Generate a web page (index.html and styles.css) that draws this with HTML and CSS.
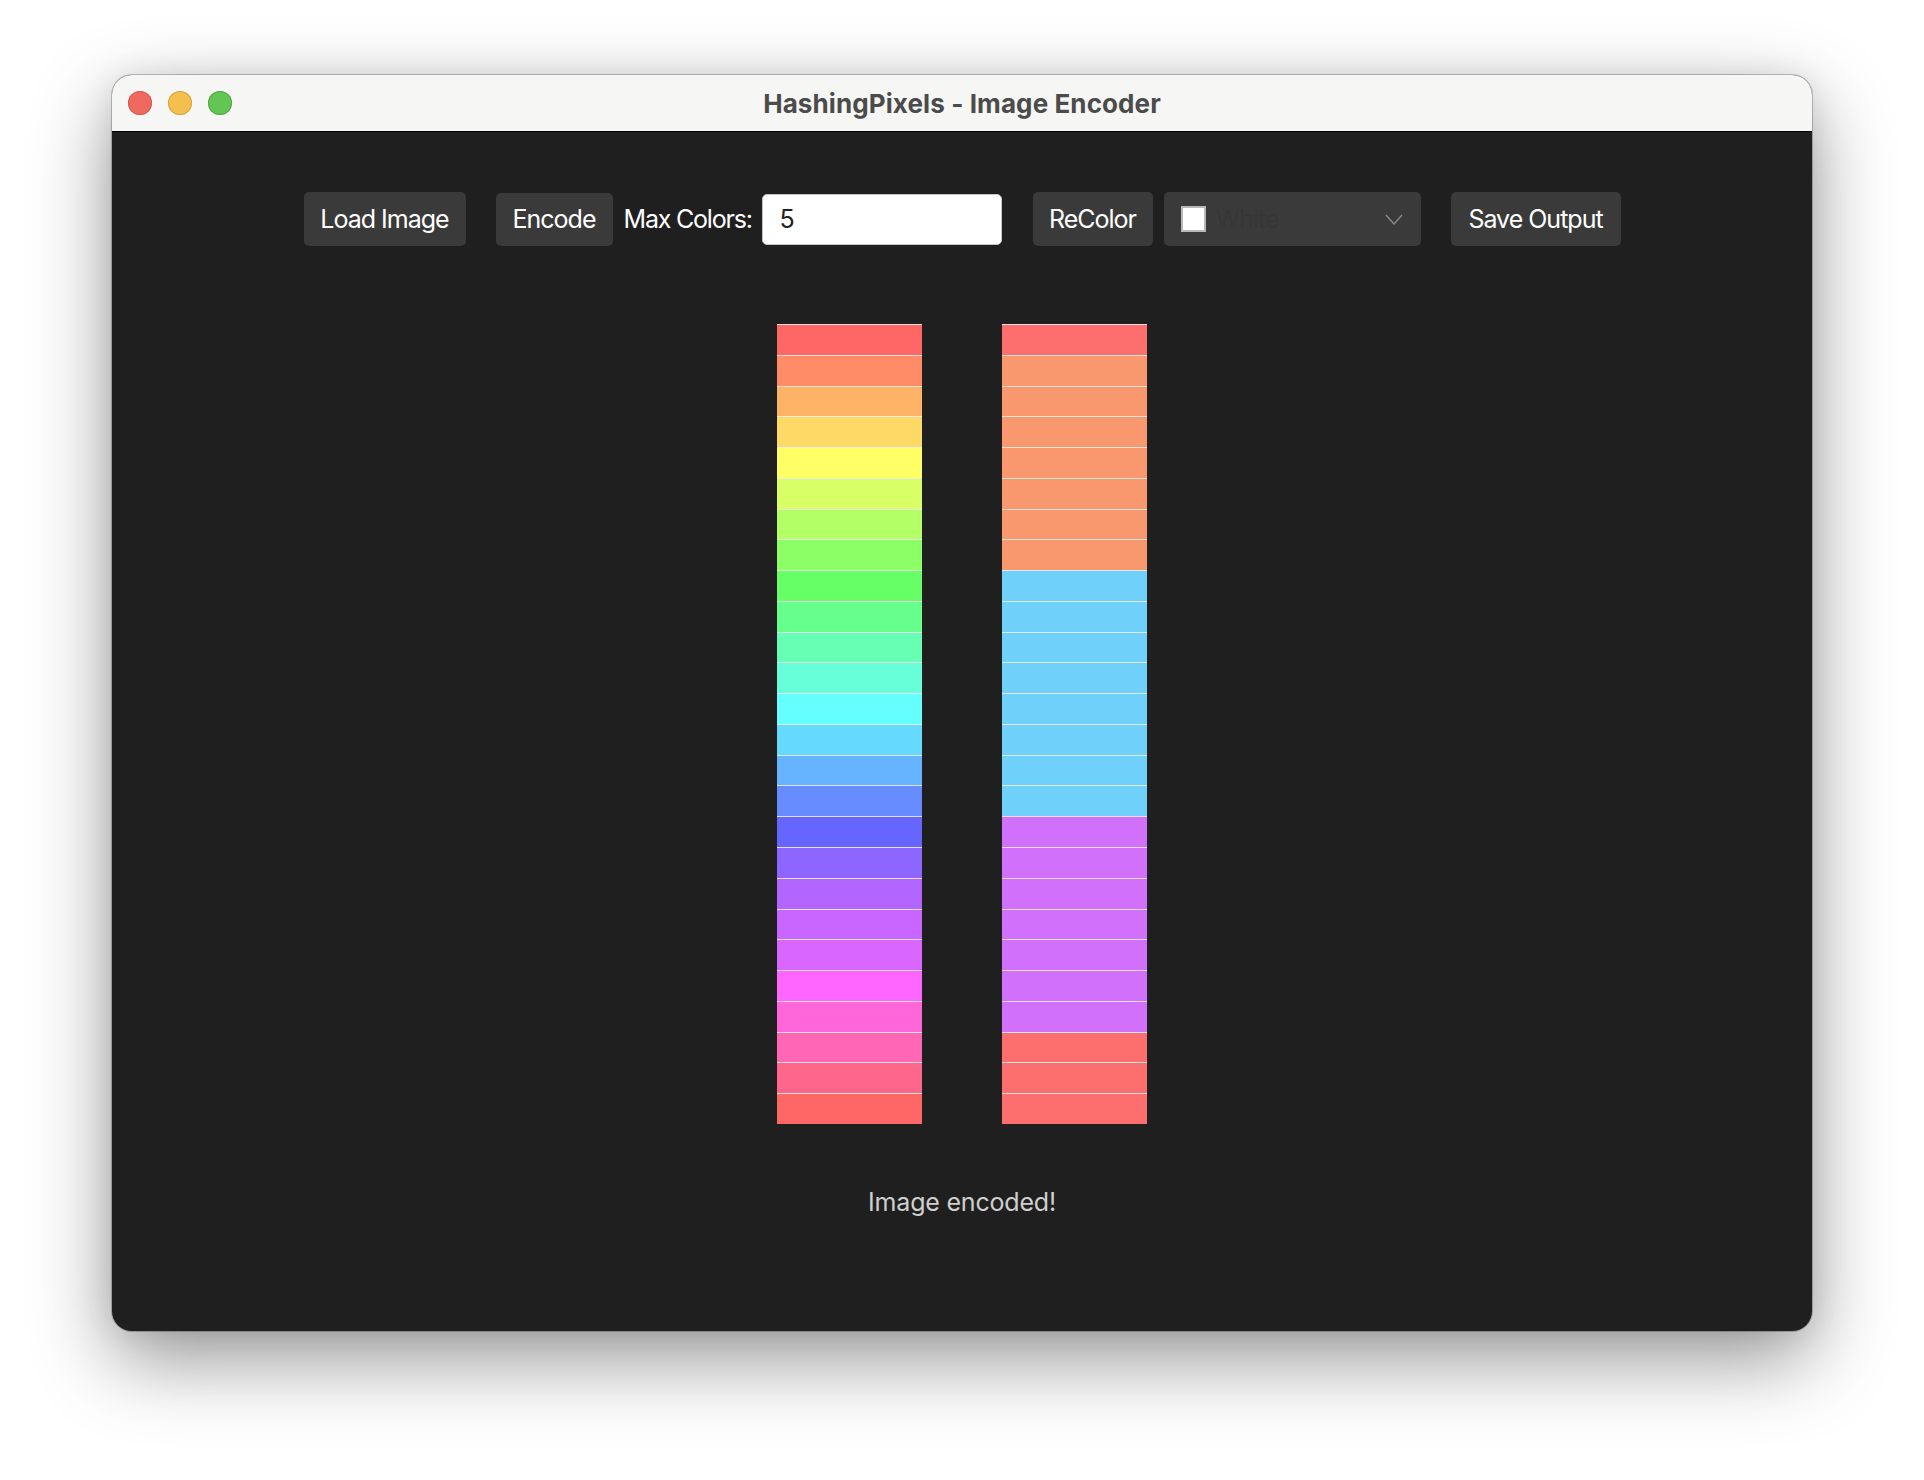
FILE: index.html
```html
<!DOCTYPE html>
<html>
<head>
<meta charset="utf-8">
<title>HashingPixels - Image Encoder</title>
<link rel="stylesheet" href="styles.css">
</head>
<body>
<div class="window">
  <div class="titlebar">
    <div class="lights">
      <span class="light red"></span>
      <span class="light yellow"></span>
      <span class="light green"></span>
    </div>
    <div class="title">HashingPixels - Image Encoder</div>
  </div>
  <div class="content">
    <div class="toolbar">
      <button class="btn btn-load">Load Image</button>
      <div class="group group-encode">
        <button class="btn btn-encode">Encode</button>
        <span class="label">Max Colors:</span>
        <input class="num" type="text" value="5">
      </div>
      <div class="group group-recolor">
        <button class="btn btn-recolor">ReColor</button>
        <div class="select">
          <span class="swatch"></span>
          <span class="select-text">White</span>
          <svg class="chev" width="18" height="11" viewBox="0 0 18 11"><path d="M1 1 L9 10 L17 1" fill="none" stroke="#8a8a8a" stroke-width="1.4"/></svg>
        </div>
      </div>
      <button class="btn btn-save">Save Output</button>
    </div>
    <div class="bars">
      <div class="bar">
        <div class="strip" style="background:#ff6666"></div>
        <div class="strip" style="background:#ff8c66"></div>
        <div class="strip" style="background:#ffb366"></div>
        <div class="strip" style="background:#ffd966"></div>
        <div class="strip" style="background:#ffff66"></div>
        <div class="strip" style="background:#d9ff66"></div>
        <div class="strip" style="background:#b3ff66"></div>
        <div class="strip" style="background:#8cff66"></div>
        <div class="strip" style="background:#66ff66"></div>
        <div class="strip" style="background:#66ff8c"></div>
        <div class="strip" style="background:#66ffb3"></div>
        <div class="strip" style="background:#66ffd9"></div>
        <div class="strip" style="background:#66ffff"></div>
        <div class="strip" style="background:#66d9ff"></div>
        <div class="strip" style="background:#66b3ff"></div>
        <div class="strip" style="background:#668cff"></div>
        <div class="strip" style="background:#6666ff"></div>
        <div class="strip" style="background:#8c66ff"></div>
        <div class="strip" style="background:#b366ff"></div>
        <div class="strip" style="background:#c966ff"></div>
        <div class="strip" style="background:#d966ff"></div>
        <div class="strip" style="background:#ff66ff"></div>
        <div class="strip" style="background:#ff66d9"></div>
        <div class="strip" style="background:#ff66b3"></div>
        <div class="strip" style="background:#ff668c"></div>
        <div class="strip" style="background:#ff6666"></div>
      </div>
      <div class="bar">
        <div class="strip" style="background:#fd6f6f"></div>
        <div class="strip" style="background:#f9976f"></div>
        <div class="strip" style="background:#f9976f"></div>
        <div class="strip" style="background:#f9976f"></div>
        <div class="strip" style="background:#f9976f"></div>
        <div class="strip" style="background:#f9976f"></div>
        <div class="strip" style="background:#f9976f"></div>
        <div class="strip" style="background:#f9976f"></div>
        <div class="strip" style="background:#6fd1fa"></div>
        <div class="strip" style="background:#6fd1fa"></div>
        <div class="strip" style="background:#6fd1fa"></div>
        <div class="strip" style="background:#6fd1fa"></div>
        <div class="strip" style="background:#6fd1fa"></div>
        <div class="strip" style="background:#6fd1fa"></div>
        <div class="strip" style="background:#6fd1fa"></div>
        <div class="strip" style="background:#6fd1fa"></div>
        <div class="strip" style="background:#d170fa"></div>
        <div class="strip" style="background:#d170fa"></div>
        <div class="strip" style="background:#d170fa"></div>
        <div class="strip" style="background:#d170fa"></div>
        <div class="strip" style="background:#d170fa"></div>
        <div class="strip" style="background:#d170fa"></div>
        <div class="strip" style="background:#d170fa"></div>
        <div class="strip" style="background:#fd6f6f"></div>
        <div class="strip" style="background:#fd6f6f"></div>
        <div class="strip" style="background:#fd6f6f"></div>
      </div>
    </div>
    <div class="status">Image encoded!</div>
  </div>
</div>
</body>
</html>
```
FILE: styles.css
```css
* { box-sizing: border-box; }
html, body {
  margin: 0;
  padding: 0;
  background: #ffffff;
}
body {
  width: 1924px;
  height: 1480px;
  overflow: hidden;
  padding-top: 75px;
  padding-left: 112px;
  font-family: Inter, "Noto Sans", "Liberation Sans", sans-serif;
}
.window {
  width: 1700px;
  height: 1256px;
  border-radius: 20px;
  overflow: hidden;
  display: flex;
  flex-direction: column;
  box-shadow: 0 0 0 1px rgba(0,0,0,0.22), 0 28px 80px rgba(0,0,0,0.42), 0 0 30px rgba(0,0,0,0.08);
  background: #1f1f1f;
}
.titlebar {
  height: 57px;
  flex: none;
  background: #f6f6f4;
  border-bottom: 1px solid #000;
  display: flex;
  align-items: center;
  justify-content: center;
  position: relative;
}
.lights {
  position: absolute;
  left: 16px;
  top: 16px;
  display: flex;
  gap: 16px;
}
.light {
  width: 24px;
  height: 24px;
  border-radius: 50%;
  display: block;
}
.red { background: #ee6a5f; box-shadow: inset 0 0 0 1px #d85a50; }
.yellow { background: #f5bf4f; box-shadow: inset 0 0 0 1px #d9a43c; }
.green { background: #62c554; box-shadow: inset 0 0 0 1px #53ab46; }
.title {
  font-weight: 700;
  font-size: 26px;
  color: #4b4b4b;
  letter-spacing: 0.1px;
}
.content {
  flex: 1;
  display: flex;
  flex-direction: column;
  align-items: center;
  padding-top: 60px;
}
.toolbar {
  display: flex;
  align-items: center;
  gap: 30px;
}
.group {
  display: flex;
  align-items: center;
  gap: 11px;
}
.group-recolor { margin-left: 1px; }
.btn {
  height: 54px;
  border: none;
  border-radius: 5px;
  background: #3a3a3a;
  color: #ffffff;
  font-family: Inter, "Noto Sans", "Liberation Sans", sans-serif;
  font-size: 25px;
  letter-spacing: -1px;
  padding: 0;
  text-align: center;
}
.btn-load { width: 162px; }
.btn-encode { width: 117px; height: 53px; }
.btn-recolor { width: 120px; }
.btn-save { width: 170px; }
.label {
  color: #ffffff;
  font-size: 25px;
  letter-spacing: -1.2px;
  width: 127px;
  white-space: nowrap;
}
.num {
  width: 240px;
  height: 51px;
  border: 1.5px solid #c4c4c4;
  border-radius: 5px;
  background: #ffffff;
  padding: 0 0 0 17px;
  font-family: Inter, "Noto Sans", "Liberation Sans", sans-serif;
  font-size: 25px;
  color: #222222;
}
.select {
  width: 257px;
  height: 54px;
  border-radius: 5px;
  background: #3a3a3a;
  display: flex;
  align-items: center;
  padding-left: 17px;
  padding-right: 18px;
}
.swatch {
  width: 25px;
  height: 26px;
  background: #ffffff;
  border: 2px solid #b9b9b9;
  flex: none;
}
.select-text {
  margin-left: 10px;
  color: #363636;
  font-size: 25px;
  letter-spacing: -1px;
  flex: 1;
}
.chev { flex: none; }
.bars {
  margin-top: 78px;
  display: flex;
  gap: 80px;
}
.bar {
  width: 145px;
  height: 800px;
  display: flex;
  flex-direction: column;
}
.strip {
  flex: 1;
  border-top: 1.5px solid rgba(236,236,236,0.9);
}
.status {
  margin-top: 62px;
  color: #cfcfcf;
  font-size: 25px;
  line-height: 32px;
  letter-spacing: -0.2px;
}
```
